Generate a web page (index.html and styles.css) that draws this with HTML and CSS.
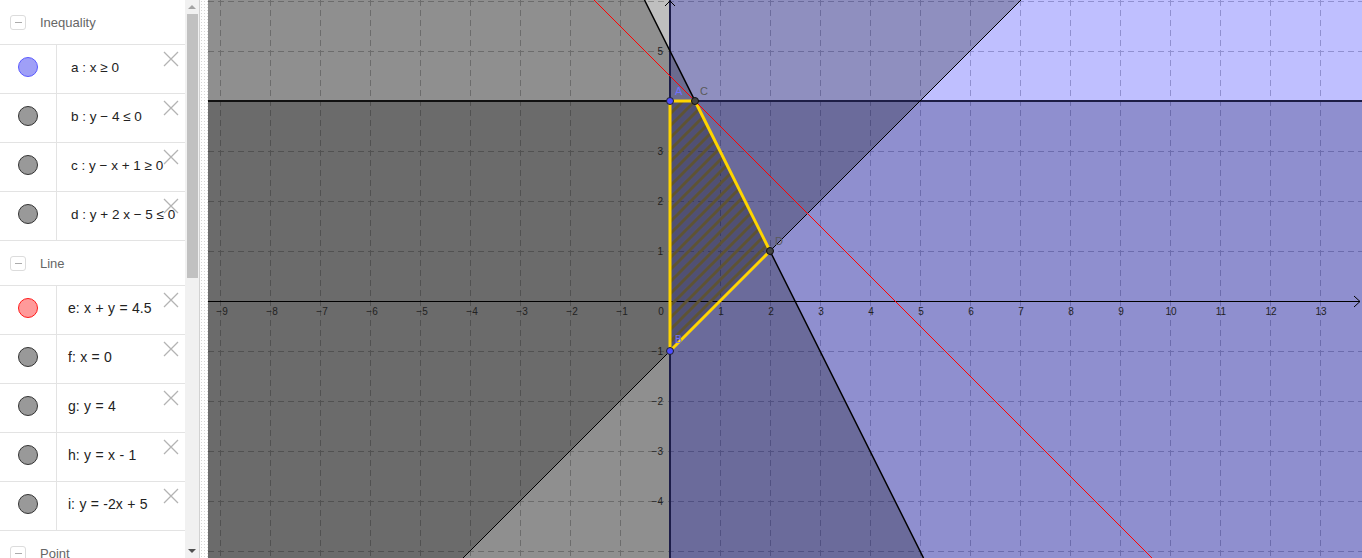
FILE: index.html
```html
<!DOCTYPE html>
<html lang="en">
<head>
<meta charset="utf-8">
<title>Inequalities</title>
<link rel="stylesheet" href="styles.css">
</head>
<body>
<div class="app">
  <aside class="algebra">
    <div class="list">
      <div class="group"><span class="toggle"></span><span class="group-name">Inequality</span></div>
      <div class="item">
        <div class="marker"><span class="dot dot-blue"></span></div>
        <div class="formula ineq">a : x ≥ 0</div>
        <svg class="close" viewBox="0 0 16 16"><path d="M1 1L15 15M15 1L1 15"/></svg>
      </div>
      <div class="item">
        <div class="marker"><span class="dot"></span></div>
        <div class="formula ineq">b : y − 4 ≤ 0</div>
        <svg class="close" viewBox="0 0 16 16"><path d="M1 1L15 15M15 1L1 15"/></svg>
      </div>
      <div class="item">
        <div class="marker"><span class="dot"></span></div>
        <div class="formula ineq">c : y − x + 1 ≥ 0</div>
        <svg class="close" viewBox="0 0 16 16"><path d="M1 1L15 15M15 1L1 15"/></svg>
      </div>
      <div class="item">
        <div class="marker"><span class="dot"></span></div>
        <div class="formula ineq">d : y + 2 x − 5 ≤ 0</div>
        <svg class="close" viewBox="0 0 16 16"><path d="M1 1L15 15M15 1L1 15"/></svg>
      </div>
      <div class="group"><span class="toggle"></span><span class="group-name">Line</span></div>
      <div class="item">
        <div class="marker"><span class="dot dot-red"></span></div>
        <div class="formula eq">e: x + y = 4.5</div>
        <svg class="close" viewBox="0 0 16 16"><path d="M1 1L15 15M15 1L1 15"/></svg>
      </div>
      <div class="item">
        <div class="marker"><span class="dot"></span></div>
        <div class="formula eq">f: x = 0</div>
        <svg class="close" viewBox="0 0 16 16"><path d="M1 1L15 15M15 1L1 15"/></svg>
      </div>
      <div class="item">
        <div class="marker"><span class="dot"></span></div>
        <div class="formula eq">g: y = 4</div>
        <svg class="close" viewBox="0 0 16 16"><path d="M1 1L15 15M15 1L1 15"/></svg>
      </div>
      <div class="item">
        <div class="marker"><span class="dot"></span></div>
        <div class="formula eq">h: y = x - 1</div>
        <svg class="close" viewBox="0 0 16 16"><path d="M1 1L15 15M15 1L1 15"/></svg>
      </div>
      <div class="item">
        <div class="marker"><span class="dot"></span></div>
        <div class="formula eq">i: y = -2x + 5</div>
        <svg class="close" viewBox="0 0 16 16"><path d="M1 1L15 15M15 1L1 15"/></svg>
      </div>
      <div class="group"><span class="toggle"></span><span class="group-name">Point</span></div>
    </div>
    <div class="scrollbar">
      <span class="arrow up"></span>
      <span class="thumb"></span>
      <span class="track"></span>
      <span class="arrow down"></span>
    </div>
  </aside>
  <div class="splitter"></div>
  <main class="graphics">
    <svg class="plot" width="1154" height="558" viewBox="0 0 1154 558">
      <defs>
        <pattern id="hatch" width="12" height="12" patternUnits="userSpaceOnUse">
          <path d="M0 12L12 0M-3 3L3 -3M9 15L15 9" stroke="#5e5334" stroke-width="3"/>
        </pattern>
      </defs>
      <rect x="0" y="0" width="1154" height="558" fill="#ffffff"/>
      <path class="grid" d="M12.5 0V558M62.5 0V558M112.5 0V558M162.5 0V558M212.5 0V558M262.5 0V558M312.5 0V558M362.5 0V558M412.5 0V558M512.5 0V558M562.5 0V558M612.5 0V558M662.5 0V558M712.5 0V558M762.5 0V558M812.5 0V558M862.5 0V558M912.5 0V558M962.5 0V558M1012.5 0V558M1062.5 0V558M1112.5 0V558M0 1.5H1154M0 51.5H1154M0 151.5H1154M0 201.5H1154M0 251.5H1154M0 351.5H1154M0 401.5H1154M0 451.5H1154M0 501.5H1154M0 551.5H1154"/>
      <rect x="0" y="101" width="1154" height="457" fill="rgba(0,0,0,0.25)"/>
      <rect x="462" y="0" width="692" height="558" fill="rgba(0,0,255,0.25)"/>
      <polygon points="0,0 813,0 255,558 0,558" fill="rgba(0,0,0,0.25)"/>
      <polygon points="0,0 436.5,0 715.5,558 0,558" fill="rgba(0,0,0,0.25)"/>
      <line x1="0" y1="301.5" x2="1152" y2="301.5" stroke="#000" stroke-width="1"/>
      <path d="M1146 296L1152 301.5L1146 307" fill="none" stroke="#000" stroke-width="1"/>
      <line x1="462" y1="0" x2="462" y2="558" stroke="#1c1c48" stroke-width="2"/>
      <path d="M457 6L462 1L467 6" fill="none" stroke="#000" stroke-width="1"/>
      <line x1="0" y1="101" x2="462" y2="101" stroke="#111" stroke-width="2"/>
      <line x1="462" y1="101" x2="1154" y2="101" stroke="#1e1e46" stroke-width="2"/>
      <line x1="255" y1="558" x2="813" y2="0" stroke="#000" stroke-width="1"/>
      <line x1="436.5" y1="0" x2="715.5" y2="558" stroke="#000" stroke-width="1.5"/>
      <polygon points="462,101 487,101 562,251 462,351" fill="url(#hatch)" stroke="#ffd500" stroke-width="3" stroke-linejoin="round"/>
      <line x1="386" y1="0" x2="944" y2="558" stroke="#ff0000" stroke-width="1"/>
      <g class="ticks">
        <text x="14" y="315">−9</text>
        <text x="64" y="315">−8</text>
        <text x="114" y="315">−7</text>
        <text x="164" y="315">−6</text>
        <text x="214" y="315">−5</text>
        <text x="264" y="315">−4</text>
        <text x="314" y="315">−3</text>
        <text x="364" y="315">−2</text>
        <text x="414" y="315">−1</text>
        <text x="453" y="315">0</text>
        <text x="513" y="315">1</text>
        <text x="563" y="315">2</text>
        <text x="613" y="315">3</text>
        <text x="663" y="315">4</text>
        <text x="713" y="315">5</text>
        <text x="763" y="315">6</text>
        <text x="813" y="315">7</text>
        <text x="863" y="315">8</text>
        <text x="913" y="315">9</text>
        <text x="963" y="315">10</text>
        <text x="1013" y="315">11</text>
        <text x="1063" y="315">12</text>
        <text x="1113" y="315">13</text>
      </g>
      <g class="yticks">
        <text x="455" y="55">5</text>
        <text x="455" y="155">3</text>
        <text x="455" y="205">2</text>
        <text x="455" y="255">1</text>
        <text x="455" y="355">−1</text>
        <text x="455" y="405">−2</text>
        <text x="455" y="455">−3</text>
        <text x="455" y="505">−4</text>
      </g>
      <circle cx="462" cy="101" r="3.5" fill="#4d4dff" stroke="#222" stroke-width="1"/>
      <circle cx="487" cy="101" r="3.5" fill="#444" stroke="#111" stroke-width="1"/>
      <circle cx="562" cy="251" r="3.5" fill="#444" stroke="#111" stroke-width="1"/>
      <circle cx="462" cy="351" r="3.5" fill="#4d4dff" stroke="#222" stroke-width="1"/>
      <text class="plabel blue" x="467" y="95">A</text>
      <text class="plabel" x="492" y="95">C</text>
      <text class="plabel" x="567" y="245">D</text>
      <text class="plabel blue small" x="467" y="343">B</text>
    </svg>
  </main>
</div>
</body>
</html>
```

FILE: styles.css
```css
* { box-sizing: border-box; }
html, body { margin: 0; padding: 0; }
body {
  width: 1362px;
  height: 558px;
  overflow: hidden;
  background: #fff;
  font-family: "Liberation Sans", Arial, sans-serif;
}
.app { display: flex; height: 558px; }

.algebra { display: flex; width: 199px; flex: none; height: 558px; }
.list { width: 185px; flex: none; overflow: hidden; background: #fff; }

.group {
  display: flex;
  align-items: center;
  height: 45px;
  flex: none;
  border-bottom: 1px solid #e3e3e3;
  padding-left: 10px;
}
.toggle {
  width: 16px;
  height: 15px;
  border: 1px solid #dcdcdc;
  border-radius: 3px;
  display: flex;
  align-items: center;
  justify-content: center;
}
.toggle::before { content: ""; width: 7px; height: 1px; background: #ababab; }
.group-name { margin-left: 14px; font-size: 13px; color: #666; }

.item {
  position: relative;
  display: flex;
  height: 49px;
  border-bottom: 1px solid #e3e3e3;
}
.marker {
  width: 57px;
  flex: none;
  border-right: 1px solid #e3e3e3;
  display: flex;
  align-items: center;
  justify-content: center;
  padding-bottom: 4px;
}
.dot {
  width: 20px;
  height: 20px;
  border-radius: 50%;
  border: 1px solid #333;
  background: #999;
}
.dot-blue { background: #9f9ff7; border-color: #5a5aff; }
.dot-red { background: #ff9a9a; border-color: #ff1a1a; }

.formula {
  display: flex;
  align-items: center;
  padding-bottom: 4px;
  white-space: nowrap;
  color: #222;
}
.ineq { padding-left: 14px; font-size: 13.5px; }
.eq { padding-left: 11px; font-size: 14px; word-spacing: 0.5px; }

.close {
  position: absolute;
  left: 163px;
  top: 6px;
  width: 16px;
  height: 16px;
  fill: none;
  stroke: #b3b3b3;
  stroke-width: 1.3;
}

.scrollbar {
  width: 14px;
  flex: none;
  background: #f1f1f1;
  display: flex;
  flex-direction: column;
  align-items: center;
}
.arrow {
  height: 14px;
  width: 14px;
  flex: none;
  display: flex;
  align-items: center;
  justify-content: center;
}
.arrow::before {
  content: "";
  border-left: 4px solid transparent;
  border-right: 4px solid transparent;
}
.arrow.up::before { border-bottom: 4px solid #a3a3a3; }
.arrow.down::before { border-top: 4px solid #505050; }
.thumb { width: 11px; height: 264px; flex: none; background: #c1c1c1; }
.track { flex: 1; }

.splitter {
  width: 9px;
  flex: none;
  border-left: 1px solid #d2d2d2;
  background-color: #fff;
  background-image: radial-gradient(circle, #d6d6d6 0.7px, transparent 0.9px);
  background-size: 3px 3px;
}

.graphics { width: 1154px; flex: none; height: 558px; overflow: hidden; }
.plot { display: block; }
.grid { fill: none; stroke: #c0c0c0; stroke-width: 1; stroke-dasharray: 6 4; }
.ticks text, .yticks text {
  font-family: "Liberation Sans", Arial, sans-serif;
  font-size: 10px;
  fill: #222;
}
.ticks text { text-anchor: middle; }
.yticks text { text-anchor: end; }
.plabel {
  font-family: "Liberation Sans", Arial, sans-serif;
  font-size: 11px;
  fill: #5a5a5a;
}
.plabel.blue { fill: #7070ff; }
.plabel.small { font-size: 10px; }
```
